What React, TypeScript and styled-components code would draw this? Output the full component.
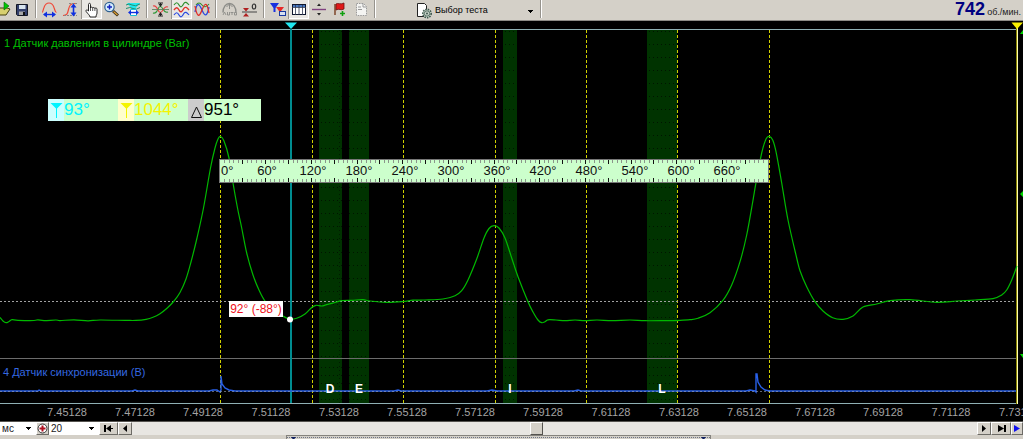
import React from "react";
import styled, { createGlobalStyle, css } from "styled-components";

const VIEW_W = 1023;
const VIEW_H = 383;
const VIEW_TOP = 21;

const Global = createGlobalStyle`
  *, *::before, *::after { box-sizing: border-box; }
  html, body { margin: 0; padding: 0; background: #000; }
  body { font-family: "Liberation Sans", Arial, sans-serif; overflow-x: hidden; }
  button, select, input { font-family: inherit; margin: 0; }
`;

const Page = styled.div`
  display: flex;
  flex-direction: column;
  min-height: 100vh;
  background: #000;
`;

const Toolbar = styled.header`
  display: flex;
  align-items: stretch;
  height: 21px;
  flex: none;
  overflow: hidden;
  background: #d4d0c8;
  border-bottom: 1px solid #8c8a85;
`;

const ToolButton = styled.button<{ $pressed?: boolean; $w?: number }>`
  display: flex;
  justify-content: flex-end;
  flex: none;
  width: ${(p) => p.$w ?? 21}px;
  height: 19px;
  padding: 0;
  border: 0;
  overflow: hidden;
  background: ${(p) => (p.$pressed ? "#e9e7e3" : "transparent")};
  ${(p) =>
    p.$pressed &&
    css`
      box-shadow: inset 1px 0 #96938d, inset -1px -1px #fff;
    `}
  svg {
    flex: none;
    display: block;
  }
`;

const Divider = styled.i`
  flex: none;
  width: 2px;
  height: 18px;
  margin: 0 2px;
  background: #fff;
  border-left: 1px solid #96938d;
`;

const TestPicker = styled.label`
  display: flex;
  align-items: center;
  width: 160px;
  padding-left: 38px;
  flex: none;
  gap: 2px;
  svg {
    flex: none;
  }
`;

const arrow = css`
  background-image: linear-gradient(#000, #000), linear-gradient(#000, #000), linear-gradient(#000, #000);
  background-size: 5px 1px, 3px 1px, 1px 1px;
  background-repeat: no-repeat;
`;

const TestSelect = styled.select`
  appearance: none;
  flex: 1;
  min-width: 0;
  height: 18px;
  padding: 0;
  border: 0;
  color: #000;
  font-size: 9px;
  background-color: transparent;
  ${arrow}
  background-position: right 5px top 9px, right 6px top 10px, right 7px top 11px;
`;

const Rpm = styled.output`
  display: flex;
  align-items: baseline;
  gap: 2px;
  margin-left: auto;
  padding-right: 2px;
  line-height: 18px;
  font-size: 9px;
  color: #222;
  b {
    font-size: 18px;
    color: #000080;
  }
`;

const Plot = styled.main`
  position: relative;
  flex: 1;
  min-height: ${VIEW_H}px;
  overflow: hidden;
`;

const PlotDrawing = styled.svg`
  position: absolute;
  inset: 0;
  width: 100%;
  height: 100%;
  display: block;
`;

const Overlay = styled.div<{ $x: number; $y: number }>`
  position: absolute;
  left: ${(p) => (p.$x / VIEW_W) * 100}%;
  top: ${(p) => ((p.$y - VIEW_TOP) / VIEW_H) * 100}%;
`;

const ChannelName = styled(Overlay)<{ $color: string }>`
  font-size: 11px;
  line-height: 14px;
  white-space: nowrap;
  color: ${(p) => p.$color};
`;

const PhaseLetter = styled(Overlay)`
  width: 20px;
  margin-left: -10px;
  text-align: center;
  font-size: 12px;
  line-height: 14px;
  font-weight: bold;
  color: #fff;
`;

const Readout = styled(Overlay)`
  display: flex;
  width: 213px;
  height: 22px;
  background: #ccffcc;
`;

const ReadoutItem = styled.div<{ $color: string; $chip: string }>`
  display: flex;
  flex: none;
  width: 70px;
  font-size: 17px;
  line-height: 22px;
  color: ${(p) => p.$color};
  svg {
    flex: none;
    width: 16px;
    height: 22px;
    background: ${(p) => p.$chip};
  }
`;

const Ruler = styled(Overlay)`
  width: ${(550 / VIEW_W) * 100}%;
  height: 24px;
  background: #ccffcc;
  border: 1px solid #777;
`;

const RulerTicks = styled.svg`
  position: absolute;
  inset: 0;
  width: 100%;
  height: 100%;
`;

const RulerScale = styled.div`
  display: flex;
  font-size: 13px;
  line-height: 22px;
  color: #111;
  span {
    flex: 2 2 0;
    min-width: 0;
    padding-left: 5px;
    text-align: center;
    white-space: nowrap;
  }
  span:first-child {
    flex: 1 1 0;
    padding-left: 1px;
    text-align: left;
  }
  span:last-child {
    flex: 1 1 0;
    padding: 0;
  }
`;

const AngleTag = styled(Overlay)`
  height: 16px;
  width: 54px;
  text-align: center;
  background: #fff;
  color: #ee1020;
  font-size: 12px;
  line-height: 16px;
  white-space: nowrap;
`;

const TimeAxis = styled.div`
  display: flex;
  flex: none;
  height: 17px;
  padding-left: 33px;
  overflow: hidden;
  font-size: 11px;
  line-height: 17px;
  color: #a4a4a4;
  background: #000;
  span {
    flex: 0 0 68px;
    text-align: center;
  }
`;

const Footer = styled.footer`
  flex: none;
  background: #d4d0c8;
  border-top: 1px solid #55534f;
`;

const ScrollRow = styled.div`
  display: flex;
  height: 13px;
`;

const FooterSelect = styled.select<{ $w: number }>`
  appearance: none;
  flex: none;
  width: ${(p) => p.$w}px;
  height: 13px;
  padding: 0 0 0 2px;
  border: 0;
  border-radius: 0;
  font-size: 10px;
  line-height: 13px;
  color: #222;
  background-color: #fff;
  ${arrow}
  background-position: right 5px top 5px, right 6px top 6px, right 7px top 7px;
`;

const FooterButton = styled.button<{ $w: number }>`
  display: flex;
  align-items: center;
  justify-content: center;
  flex: none;
  width: ${(p) => p.$w}px;
  height: 13px;
  padding: 0;
  border: 1px solid;
  border-color: #fff #6d6b66 #6d6b66 #fff;
  background: #d4d0c8;
  overflow: hidden;
  svg {
    flex: none;
  }
`;

const Position = styled.input`
  appearance: none;
  flex: 1;
  min-width: 0;
  height: 13px;
  background: #e8e6e2;
  &::-webkit-slider-thumb {
    appearance: none;
    width: 13px;
    height: 13px;
    border: 1px solid;
    border-color: #fff #55534f #55534f #fff;
    background: #d4d0c8;
  }
`;

const SplitterRow = styled.div`
  display: flex;
  height: 4px;
  padding: 0 30.5% 0 28%;
`;

const Splitter = styled.div`
  display: flex;
  justify-content: space-between;
  flex: 1;
  padding: 1px 4px 0;
  border-top: 1px solid #85837e;
  border-left: 1px solid #85837e;
  border-right: 1px solid #85837e;
  background: repeating-linear-gradient(90deg, #6d7486 0 1px, #d4d0c8 1px 2px) 0 1px / 100% 1px no-repeat;
`;

type Pt = [number, number];

const smooth = (pts: Pt[]) =>
  pts.slice(0, -1).reduce((d, p, i) => {
    const a = pts[i - 1] ?? p;
    const q = pts[i + 1];
    const b = pts[i + 2] ?? q;
    const k = 1 / 6;
    return `${d}C${p[0] + (q[0] - a[0]) * k} ${p[1] + (q[1] - a[1]) * k} ${q[0] - (b[0] - p[0]) * k} ${
      q[1] - (b[1] - p[1]) * k
    } ${q[0]} ${q[1]}`;
  }, `M${pts[0][0]} ${pts[0][1]}`);

const pressure: Pt[] = [
  [0, 317.5], [3, 321], [6, 322.7], [9, 321.5], [12, 319.7], [18, 320.3], [34, 320.5], [38, 319.8], [44, 320.6],
  [56, 320], [60, 320.6], [74, 319.8], [88, 320.8], [100, 320], [126, 320.4], [136, 320.4], [146, 319.3], [153, 317.3],
  [160, 313.7], [167, 308.3], [174, 301], [180, 292.5], [186, 279], [191, 262], [197, 238], [203.5, 208], [210.5, 168],
  [215, 148], [218, 139], [220.5, 136.5], [224, 141], [229, 158], [233, 183], [237.5, 208], [241.7, 228], [246.7, 253],
  [253, 275], [259, 290], [265, 301], [274, 310], [282.7, 316], [290, 319.3], [296.7, 318.3], [305, 314], [311.7, 307.5],
  [316, 305.3], [321.7, 306], [326.7, 304.7], [336.7, 302], [341.7, 300.7], [352, 300.3], [363, 299.7], [370, 301],
  [386.7, 302.3], [403, 301.5], [413, 300.2], [425, 300], [443, 299], [455, 295.7], [461.7, 290.7], [468, 280],
  [476.7, 259], [484, 238], [489, 228.5], [494, 225.7], [499, 228], [505, 238], [511.7, 258], [518, 276.7], [528, 301.7],
  [533, 312], [538, 320], [541.7, 322.7], [545, 321.8], [548, 319.8], [556, 320], [565, 320.7], [575, 320], [585, 320.6],
  [597, 320], [612, 320.7], [630, 320], [645, 320.7], [665, 320.6], [680, 320.3], [690, 319.7], [698, 318.2], [710, 312.7],
  [722.7, 300.7], [731.7, 285], [740, 261.7], [746.7, 235], [752.7, 202], [756, 182.7], [761.7, 153], [766, 139],
  [769.3, 136.3], [772.7, 140], [776, 151.7], [781.7, 183], [788, 220], [796.7, 258], [800, 270.7], [806.7, 286.7],
  [815, 301.7], [823, 311], [832.7, 317.7], [843, 319.3], [853, 316], [863, 307], [876.7, 304], [890, 300.7],
  [910, 299.7], [936.7, 302.3], [956.7, 301], [975, 300], [993, 298.7], [1001.7, 295], [1006.7, 290], [1011.7, 280],
  [1017, 266],
];

const syncPath =
  "M0 391H38l1 -1 2 1H132l3 -1 3 1H209l4 -1 4 0 3 2 1 -2V376l1 8 3 4 4 2 6 1H394l4 -1 3 1H487l5 -1 5 1H574l4 -1 3 1H746l4 -1 5 1 1 1V374l1 0 1 8 3 5 4 3 5 1H1016";

const crankLines = [220, 312, 403, 495, 586, 677, 769];
const bands = [
  { x: 319, w: 23 },
  { x: 349, w: 20 },
  { x: 503, w: 14 },
  { x: 647, w: 30 },
];
const phases = [
  { name: "D", x: 330 },
  { name: "E", x: 359 },
  { name: "I", x: 510 },
  { name: "L", x: 662 },
];
const times = Array.from({ length: 15 }, (_, i) => (7.45128 + i * 0.02).toFixed(5));
const angles = Array.from({ length: 12 }, (_, i) => `${i * 60}°`);

const wave = (y: number) => `M3 ${y}c2-3 3.500-3 5 0s3 2 4.500-1 3.500-1.500 5.500 1`;

const Icon = ({ children }: { children: React.ReactNode }) => (
  <svg width="21" height="19" viewBox="0 0 21 19" fill="none" aria-hidden="true">
    {children}
  </svg>
);

const icons = {
  open: (
    <Icon>
      <path d="M7 8h9l3 1-4 6H7z" fill="#d8d070" stroke="#444010" />
      <path d="M13 2l5 4-5 4z" fill="#00c800" stroke="#006800" strokeWidth=".6" />
    </Icon>
  ),
  save: (
    <Icon>
      <path d="M4.500 4.500h11v11h-10l-1-1z" fill="#34406c" stroke="#141824" />
      <path d="M7 5h6.500v4H7z" fill="#d8e4ee" />
      <path d="M7 11.500h6V15H7z" fill="#a8a8a8" />
      <path d="M11 12h2v3h-2z" fill="#111" />
    </Icon>
  ),
  span: (
    <Icon>
      <path d="M3 12.500c1 0 1-2.500 2-5C6 4.500 8 3 10 3s4 1.500 5 4.500c1 2.500 1 5 2.500 5" stroke="#f04838" strokeWidth="1.200" />
      <path d="M5 14.500h11" stroke="#1030e0" strokeWidth="1.400" />
      <path d="M4 14.500l4-3v6zM17 14.500l-4-3v6z" fill="#1030e0" />
    </Icon>
  ),
  amplitude: (
    <Icon>
      <path d="M3 15.500c4 0 4.500-1.500 5.500-6s2-6 6.500-6" stroke="#f04838" strokeWidth="1.200" />
      <path d="M9 3.500h9M4 15.500h13" stroke="#888" strokeDasharray="2 1" />
      <path d="M13.500 6v8" stroke="#1030e0" strokeWidth="1.600" />
      <path d="M13.500 3.500l3 4h-6zM13.500 16.500l3-4h-6z" fill="#1030e0" />
    </Icon>
  ),
  hand: (
    <Icon>
      <path
        d="M7.500 11V4.500c0-1.600 2-1.600 2 0V8c0-1.200 2.200-1.200 2.200.3 0-1.200 2.200-1 2.200.4 0-1 2.100-.9 2.100.5V13c0 1.500-1 2-1 4H9c0-1.500-2-3-3.800-5.400-.8-1.300.5-2.300 1.500-1.300z"
        fill="#fff"
        stroke="#111"
        strokeWidth=".9"
      />
      <path d="M9.500 8v3M11.700 8.500V11M13.900 9v2" stroke="#111" strokeWidth=".7" />
    </Icon>
  ),
  zoom: (
    <Icon>
      <path d="M11 11l5 4.500" stroke="#302818" strokeWidth="3" />
      <path d="M11.500 11.500l4 3.500" stroke="#e0a030" strokeWidth="1.200" />
      <circle cx="7.500" cy="7" r="4.700" fill="#d8f0ff" stroke="#306090" strokeWidth="1.200" />
      <path d="M5 7h5M7.500 4.500v5" stroke="#1020c0" strokeWidth="1.500" />
    </Icon>
  ),
  markers: (
    <Icon>
      <path d="M4 3h13l-4 5v4h-5V8z" fill="#20e8f0" />
      <path d="M3 5q3-2 6 0t8-1M3 8.500q4-2 7 0t7-1" stroke="#209070" />
      <path d="M7.500 9.500h6v6h-6z" fill="#fff" stroke="#20c0d0" />
      <path d="M7 12.500h7" stroke="#1030e0" strokeWidth="1.400" />
      <path d="M5 12.500l3-2.500v5zM16 12.500l-3-2.500v5z" fill="#1030e0" />
    </Icon>
  ),
  collapse: (
    <Icon>
      <path d="M3 13q3 1 5-4t5 0q2 4 5 3" stroke="#309838" strokeWidth="1.100" />
      <path d="M3 6q3-1 5 4t5 0q2-4 5-3" stroke="#e84040" strokeWidth="1.100" />
      <path d="M2 9.500h17" stroke="#507850" strokeWidth=".8" />
      <path d="M8 3h5M8 16h5" stroke="#222" />
      <path d="M10.500 3v3M10.500 13v3" stroke="#222" />
      <path d="M8.500 4h4l-2 3zM8.500 15h4l-2-3z" fill="#222" />
    </Icon>
  ),
  waves: (
    <Icon>
      <path d={wave(5)} stroke="#309030" strokeWidth="1.200" />
      <path d={wave(10)} stroke="#e03028" strokeWidth="1.400" />
      <path d={wave(15)} stroke="#2848e0" strokeWidth="1.200" />
    </Icon>
  ),
  overlap: (
    <Icon>
      <path d="M4 5q3-4 6 0t7-1" stroke="#309030" strokeWidth="1.100" />
      <path d="M3 12C5 2 7 3 10 10s5 7 7-3" stroke="#2848e0" strokeWidth="1.300" />
      <path d="M3 6c2 11 4 12 7 4s5-8 7 3" stroke="#e03028" strokeWidth="1.300" />
    </Icon>
  ),
  auto: (
    <Icon>
      <path d="M4 12.500C4 7 7 3.500 10.500 3.500S17 7 17 12.500" stroke="#8c8c88" strokeWidth="1.400" />
      <path d="M10.500 3v6M7.500 7l3-3 3 3" stroke="#8c8c88" />
      <path d="M4 15l1.500-3L7 15M8.500 12v3h2v-3M11.500 12.500h3M13 12.500V15M15.500 12.500h2V15h-2z" stroke="#8c8c88" strokeWidth=".9" />
    </Icon>
  ),
  zero: (
    <Icon>
      <path d="M2 12h15" stroke="#444" />
      <path d="M3 8h6l-3 3.500zM3 16.500h6l-3-3.500z" fill="#b02020" />
      <ellipse cx="14" cy="6.500" rx="1.700" ry="2.500" stroke="#333" strokeWidth="1.200" />
    </Icon>
  ),
  rulers: (
    <Icon>
      <path d="M3 3h9L8.500 8v4h-2V8z" fill="#1830e0" />
      <path d="M9 7h8l-3 4v4h-2v-4z" fill="#e82828" />
      <rect x="12.500" y="11.500" width="6" height="4" fill="#d8e0f0" stroke="#1838a0" />
    </Icon>
  ),
  table: (
    <Icon>
      <rect x="4.500" y="4.500" width="13" height="10" fill="#fff" stroke="#101830" />
      <path d="M5 5h12v2H5z" fill="#4878c0" />
      <path d="M4 7.500h14M7.500 5v10M11 5v10M14.500 5v10" stroke="#303850" strokeWidth=".8" />
    </Icon>
  ),
  divide: (
    <Icon>
      <path d="M3 9.500h14" stroke="#804080" strokeWidth="1.400" />
      <path d="M8 6l2-2.500L12 6zM8 13l2 2.500 2-2.500z" fill="#222" />
    </Icon>
  ),
  flag: (
    <Icon>
      <path d="M5 4v11" stroke="#703010" strokeWidth="1.300" />
      <path d="M6 4c2-1.500 4 1 8-1v6c-3 2-5-1-8 1z" fill="#e01818" stroke="#701010" strokeWidth=".8" />
      <path d="M12.500 11v5M10 13.500h5" stroke="#10a010" strokeWidth="1.600" />
    </Icon>
  ),
  page: (
    <Icon>
      <path d="M5.500 3.500h7l3 3v9h-10z" fill="#f4f4f2" stroke="#999" strokeDasharray="1.500 1" />
      <path d="M12 3.500V7h3.500M7 7h3M7 9.500h4" stroke="#999" />
    </Icon>
  ),
};

const Tool = ({ name, label, pressed, w }: { name: keyof typeof icons; label: string; pressed?: boolean; w?: number }) => (
  <ToolButton type="button" aria-label={label} aria-pressed={pressed} $pressed={pressed} $w={w}>
    {icons[name]}
  </ToolButton>
);

const Glyph = ({ d, color = "#000", w = 9 }: { d: string; color?: string; w?: number }) => (
  <svg width={w} height="7" viewBox={`0 0 ${w} 7`} aria-hidden="true">
    <path d={d} fill={color} />
  </svg>
);

const MarkerGlyph = ({ color }: { color: string }) => (
  <svg viewBox="0 0 16 22" aria-hidden="true">
    <path d="M2.500 4h12L9 9.500V19H8V9.500z" fill={color} />
  </svg>
);

export default function App() {
  return (
    <>
      <Global />
      <Page>
        <Toolbar>
          <Tool name="open" label="Открыть" w={12} />
          <Tool name="save" label="Сохранить" />
          <Divider />
          <Tool name="span" label="Длительность" />
          <Tool name="amplitude" label="Амплитуда" />
          <Tool name="hand" label="Перемещение" pressed />
          <Tool name="zoom" label="Увеличить" />
          <Tool name="markers" label="Маркеры" />
          <Divider />
          <Tool name="collapse" label="Совместить" />
          <Tool name="waves" label="Раздельно" pressed />
          <Tool name="overlap" label="Наложить" />
          <Divider />
          <Tool name="auto" label="Автомасштаб" />
          <Tool name="zero" label="Ноль" />
          <Divider />
          <Tool name="rulers" label="Линейки" />
          <Tool name="table" label="Таблица" pressed />
          <Tool name="divide" label="Разделить" />
          <Tool name="flag" label="Добавить метку" />
          <Tool name="page" label="Отчёт" />
          <Divider />
          <TestPicker>
            <svg width="17" height="17" viewBox="0 0 17 17" fill="none" aria-hidden="true">
              <path d="M1.500 1.500h7l2 2v11h-9z" fill="#fff" stroke="#222" />
              <circle cx="11" cy="11.500" r="4.200" fill="#c8d8c8" stroke="#405850" strokeWidth="1.600" strokeDasharray="1.500 1" />
              <circle cx="11" cy="11.500" r="2.700" fill="#c8d4c8" stroke="#587068" />
              <circle cx="11" cy="11.500" r="1" fill="#405850" />
            </svg>
            <TestSelect aria-label="Выбор теста" defaultValue="0">
              <option value="0">Выбор теста</option>
            </TestSelect>
          </TestPicker>
          <Divider />
          <Rpm>
            <b>742</b>об./мин.
          </Rpm>
        </Toolbar>

        <Plot>
          <PlotDrawing viewBox={`0 ${VIEW_TOP} ${VIEW_W} ${VIEW_H}`} preserveAspectRatio="none" aria-hidden="true">
            <defs>
              <pattern id="dotsMain" width="4" height="13" x="321" y="44" patternUnits="userSpaceOnUse">
                <rect width="1" height="1" fill="#001400" />
              </pattern>
              <pattern id="dotsSync" width="4" height="8" x="321" y="367" patternUnits="userSpaceOnUse">
                <rect width="1" height="1" fill="#001400" />
              </pattern>
            </defs>
            <g shapeRendering="crispEdges">
              {bands.map((b) => (
                <g key={b.x}>
                  <rect x={b.x} y="30" width={b.w} height="373" fill="#003300" />
                  <rect x={b.x} y="31" width={b.w} height="326" fill="url(#dotsMain)" />
                  <rect x={b.x} y="360" width={b.w} height="42" fill="url(#dotsSync)" />
                </g>
              ))}
              <path d="M339.500 30V403" stroke="#001c00" strokeDasharray="1 3" />
              <path d="M0 29.500H1017M0 403.500H1017" stroke="#8fb0b4" />
              <path d="M0 358.500H1018" stroke="#6c6c6c" />
              {crankLines.map((x) => (
                <path key={x} d={`M${x + 0.5} 30V403`} stroke="#d0d000" strokeDasharray="3 2" />
              ))}
              <path d="M0 301.500H1016" stroke="#a0a0a0" strokeDasharray="2 2" />
              <rect x="290" y="29" width="2" height="374" fill="#008c90" />
              <rect x="1016" y="24" width="1" height="380" fill="#8a8400" />
              <rect x="1017" y="24" width="1" height="380" fill="#ffffb0" />
            </g>
            <path d={smooth(pressure)} fill="none" stroke="#00b800" strokeWidth="1.200" />
            <path d={syncPath} fill="none" stroke="#2860e8" strokeWidth="1.400" />
            <path d="M0 391.500H1016" stroke="#a0a8c0" strokeDasharray="2 2" shapeRendering="crispEdges" opacity=".6" />
            <path d="M285 22.500h12l-6 6.500z" fill="#20e8f0" />
            <path d="M1011.500 22.500h11.500l-6 6.500z" fill="#f8f000" />
            <path d="M1020 34l3-4v4zM1020 194l3-3v6zM1020 354l3 4v-4z" fill="#00d800" />
            <circle cx="290" cy="319.500" r="3" fill="#fff" />
          </PlotDrawing>

          <ChannelName $x={4} $y={36} $color="#00c000">
            1 Датчик давления в цилиндре (Bar)
          </ChannelName>
          <ChannelName $x={3} $y={365} $color="#3468e0">
            4 Датчик синхронизации (В)
          </ChannelName>
          {phases.map((p) => (
            <PhaseLetter key={p.name} $x={p.x} $y={382}>
              {p.name}
            </PhaseLetter>
          ))}

          <Readout $x={48} $y={99}>
            <ReadoutItem $color="#00f4ff" $chip="#ccffff">
              <MarkerGlyph color="#00f4ff" />
              93°
            </ReadoutItem>
            <ReadoutItem $color="#f4f400" $chip="#ffffcc">
              <MarkerGlyph color="#f4f400" />
              1044°
            </ReadoutItem>
            <ReadoutItem $color="#000" $chip="#cccccc">
              <svg viewBox="0 0 16 22" fill="none" aria-hidden="true">
                <path d="M8.500 8l5 10.500h-10z" stroke="#111" />
              </svg>
              951°
            </ReadoutItem>
          </Readout>

          <Ruler $x={219} $y={159}>
            <RulerTicks viewBox="0 0 720 22" preserveAspectRatio="none" shapeRendering="crispEdges" aria-hidden="true">
              {Array.from({ length: 119 }, (_, i) => {
                const a = (i + 1) * 6;
                const major = a % 30 === 0;
                const len = major ? 4 : 3;
                return (
                  <path
                    key={a}
                    d={`M${a} 0V${len}M${a} ${22 - len}V22`}
                    stroke={major ? "#111" : "#8a948a"}
                    vectorEffect="non-scaling-stroke"
                  />
                );
              })}
            </RulerTicks>
            <RulerScale>
              {angles.map((a) => (
                <span key={a}>{a}</span>
              ))}
              <span />
            </RulerScale>
          </Ruler>

          <AngleTag $x={229} $y={301}>
            92° (-88°)
          </AngleTag>
        </Plot>

        <TimeAxis>
          {times.map((t) => (
            <span key={t}>{t}</span>
          ))}
        </TimeAxis>

        <Footer>
          <ScrollRow>
            <FooterSelect $w={36} aria-label="Единицы" defaultValue="ms">
              <option value="ms">мс</option>
            </FooterSelect>
            <FooterButton $w={13} type="button" aria-label="Центрировать">
              <svg width="11" height="11" viewBox="0 0 11 11" fill="none" aria-hidden="true">
                <circle cx="5.500" cy="5.500" r="4.500" fill="#fff" stroke="#333" />
                <path d="M5.500 2.500v6M2.500 5.500h6" stroke="#b01020" strokeWidth="2" />
              </svg>
            </FooterButton>
            <FooterSelect $w={50} aria-label="Масштаб" defaultValue="20">
              <option value="20">20</option>
            </FooterSelect>
            <FooterButton $w={19} type="button" aria-label="В начало">
              <Glyph d="M0 0h2v7H0zM7 0v7L2 3.500zM6 3h3v1H6z" />
            </FooterButton>
            <FooterButton $w={14} type="button" aria-label="Назад">
              <Glyph w={4} d="M4 0v7L0 3.500z" />
            </FooterButton>
            <Position type="range" aria-label="Позиция" min={0} max={1000} defaultValue={478} />
            <FooterButton $w={14} type="button" aria-label="Вперёд">
              <Glyph w={4} d="M0 0v7l4-3.500z" />
            </FooterButton>
            <FooterButton $w={20} type="button" aria-label="В конец">
              <Glyph d="M7 0h2v7H7zM1 0v7l6-3.500z" />
            </FooterButton>
            <FooterButton $w={12} type="button" aria-label="Воспроизвести">
              <Glyph w={6} d="M0 0v7l6-3.500z" color="#1010f0" />
            </FooterButton>
          </ScrollRow>
          <SplitterRow>
            <Splitter>
              <svg width="5" height="3" viewBox="0 0 5 3" aria-hidden="true">
                <path d="M0 0h5L2.500 3z" fill="#102060" />
              </svg>
              <svg width="5" height="3" viewBox="0 0 5 3" aria-hidden="true">
                <path d="M0 0h5L2.500 3z" fill="#102060" />
              </svg>
            </Splitter>
          </SplitterRow>
        </Footer>
      </Page>
    </>
  );
}
